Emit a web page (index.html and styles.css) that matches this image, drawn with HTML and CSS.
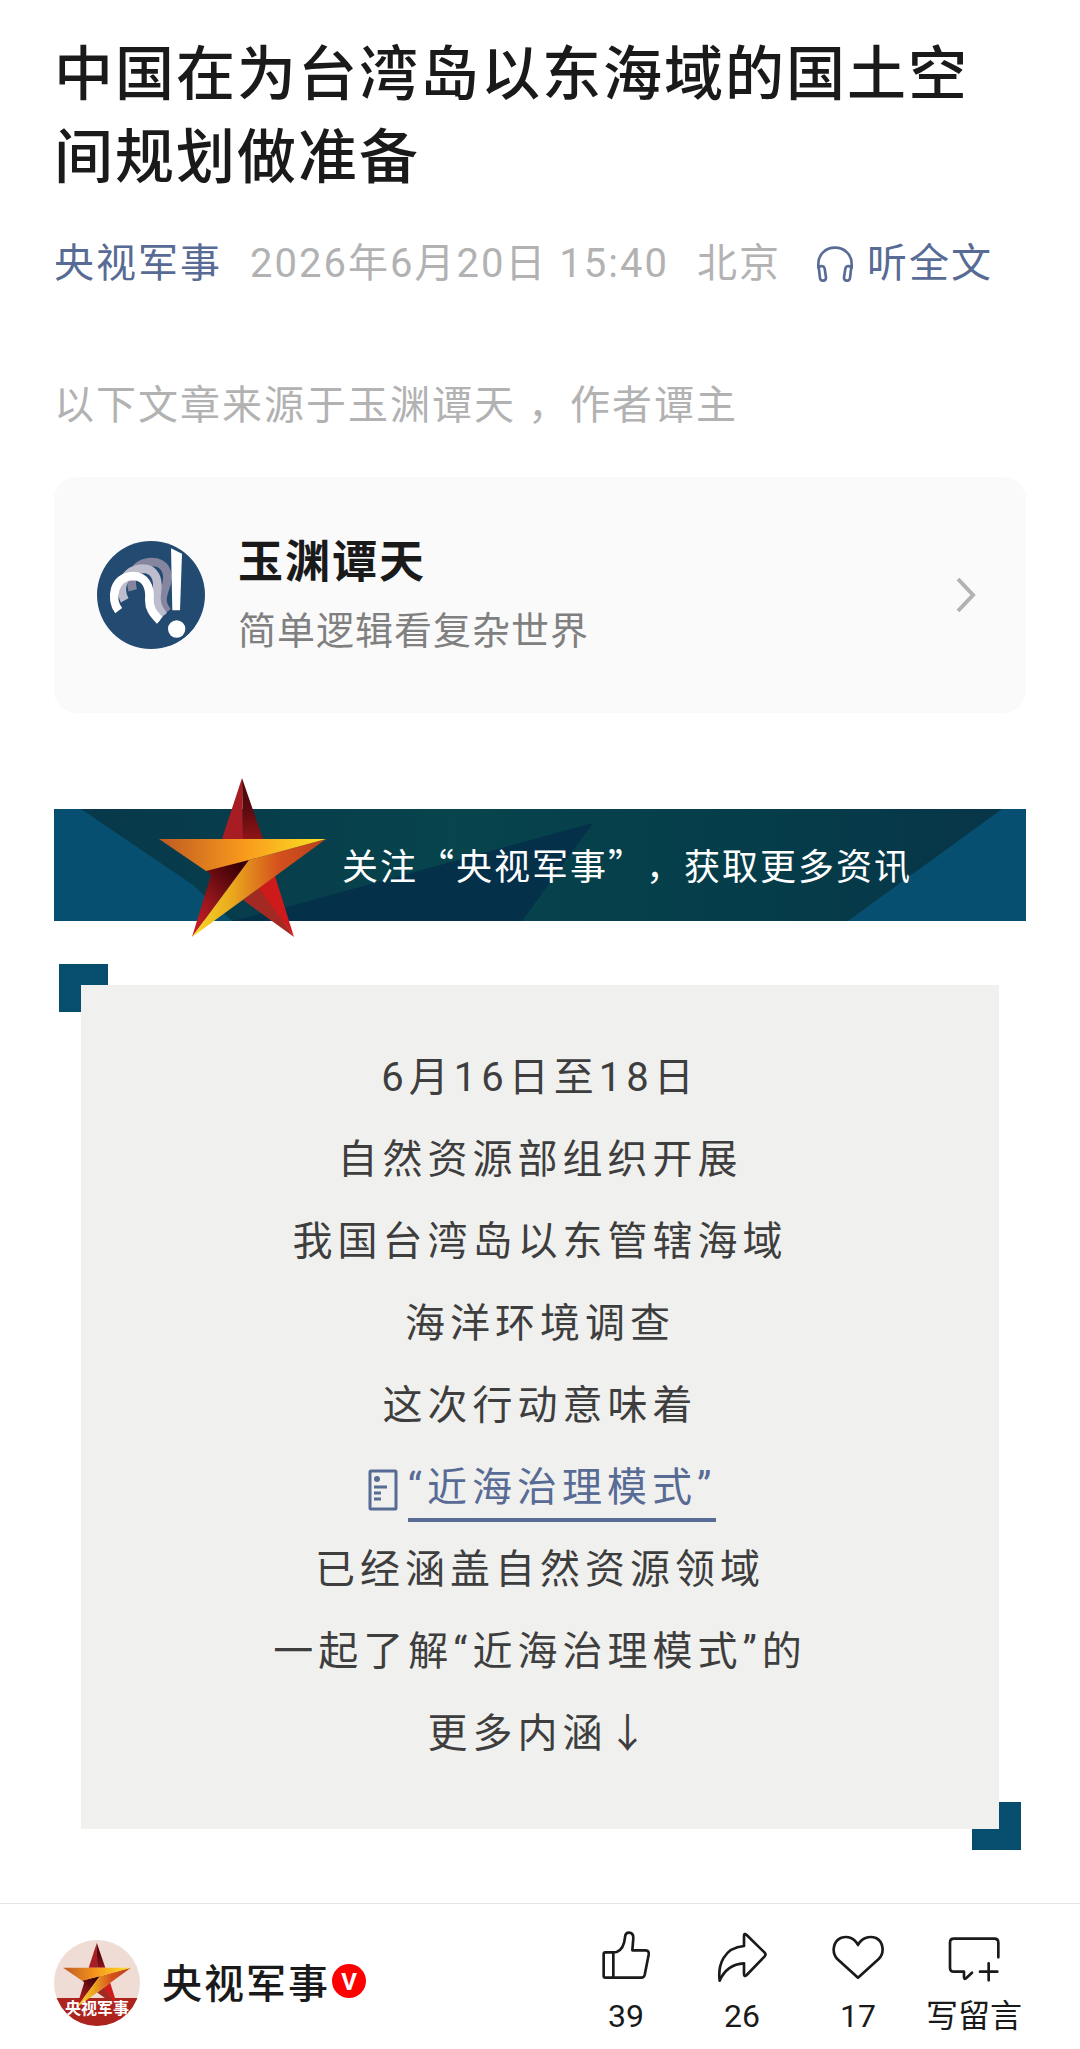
FILE: index.html
```html
<!DOCTYPE html>
<html lang="zh-CN">
<head>
    <meta charset="UTF-8">
    <meta name="viewport" content="width=device-width, initial-scale=1.0">
    <title>中国在为台湾岛以东海域的国土空间规划做准备</title>
    <link rel="stylesheet" href="styles.css">
</head>
<body>
    <main class="article">
        <h1 class="title">中国在为台湾岛以东海域的国土空间规划做准备</h1>
        <div class="meta">
            <a class="account" href="#">央视军事</a>
            <span>2026年6月20日 15:40</span>
            <span>北京</span>
            <button class="listen" type="button">
                <svg class="listen-icon" viewBox="49 44 108 108" aria-hidden="true">
                    <path d="M53 112 V98 C53 70 74 49 103 49 C132 49 153 70 153 98 V112" />
                    <path d="M54 106 Q70 101 72 112 L76 139 Q76 147 67 148 Q60 149 58 140 Z" />
                    <path d="M152 106 Q136 101 134 112 L130 139 Q130 147 139 148 Q146 149 148 140 Z" />
                </svg>
                <span>听全文</span>
            </button>
        </div>

        <p class="source">以下文章来源于玉渊谭天 ，作者谭主</p>
        <a class="card" href="#">
            <svg class="card-logo" viewBox="51 63 324 324" aria-hidden="true">
                <defs>
                    <clipPath id="disc"><circle cx="213" cy="225" r="162" /></clipPath>
                </defs>
                <g clip-path="url(#disc)">
                    <rect x="51" y="63" width="324" height="324" fill="#234a70" />
                    <g fill="none" stroke-width="26">
                        <path stroke="#8585a0" d="M158 211 C150 180 155 128 216 126 C254 126 268 157 260 190 C248 225 238 245 262 275" />
                        <path stroke="#bdbdcd" d="M134 241 C112 200 135 148 188 146 C225 146 236 178 231 212 C226 242 230 262 252 288" />
                        <path stroke="#fff" d="M116 272 C90 238 100 170 158 168 C196 168 212 200 208 240 C208 264 216 278 240 302" />
                    </g>
                    <circle cx="290" cy="327" r="56" fill="#234a70" />
                    <path fill="#fff" d="M273 85 L306 101 L300 271 L277 271 Z" />
                    <circle cx="290" cy="327" r="26" fill="#fff" />
                </g>
            </svg>
            <span class="card-text">
                <strong class="card-name">玉渊谭天</strong>
                <span class="card-desc">简单逻辑看复杂世界</span>
            </span>
            <svg class="card-arrow" viewBox="0 0 20 36" aria-hidden="true">
                <path d="M2 2 L17 18 L2 34" />
            </svg>
        </a>

        <div class="banner">
            <svg class="banner-bg" viewBox="0 0 972 112" preserveAspectRatio="none" aria-hidden="true">
                <defs>
                    <linearGradient id="teal">
                        <stop offset="0" stop-color="#07384b" />
                        <stop offset="0.4" stop-color="#07444c" />
                        <stop offset="0.7" stop-color="#053e4a" />
                        <stop offset="1" stop-color="#073548" />
                    </linearGradient>
                </defs>
                <rect width="972" height="112" fill="#064f70" />
                <path fill="url(#teal)" d="M27 0 H948 L794 112 H178 L139 76 Z" />
                <path fill="#05304a" d="M539 14 L468 112 H178 L233 98 Z" />
            </svg>
            <svg class="banner-star" viewBox="0 0 167 160" aria-hidden="true">
                <defs>
                    <linearGradient id="band">
                        <stop offset="0" stop-color="#bd5a22" />
                        <stop offset="0.5" stop-color="#f8981c" />
                        <stop offset="1" stop-color="#fce424" />
                    </linearGradient>
                    <linearGradient id="tail">
                        <stop offset="0" stop-color="#f8dc26" />
                        <stop offset="0.3" stop-color="#eaa81e" />
                        <stop offset="0.65" stop-color="#d4501c" />
                        <stop offset="1" stop-color="#b8401c" />
                    </linearGradient>
                    <linearGradient id="fold" x1="0" y1="1" x2="0.7" y2="0">
                        <stop offset="0" stop-color="#d81e28" />
                        <stop offset="0.5" stop-color="#8c151a" />
                        <stop offset="1" stop-color="#3a0004" />
                    </linearGradient>
                    <linearGradient id="spike" x1="0" y1="0" x2="0" y2="1">
                        <stop offset="0" stop-color="#4c0508" />
                        <stop offset="0.5" stop-color="#5a0a0e" />
                        <stop offset="1" stop-color="#901418" />
                    </linearGradient>
                    <symbol id="star" viewBox="0 0 167 160">
                        <path fill="#a81c24" d="M83 0 L63 61 H84 Z" />
                        <path fill="url(#spike)" d="M83 0 L84 61 H104 Z" />
                        <path fill="#a32a22" d="M84 122 L101 109 L135 159 Z" />
                        <path fill="#cf1a1c" d="M100 110 L116 98 L135 159 Z" />
                        <path fill="url(#fold)" d="M47 92 L91 81 L33 159 L52 97 Z" />
                        <path fill="url(#tail)" d="M167 61 L90 82 L33 159 Z" />
                        <path fill="url(#band)" d="M0 61 H167 L90 82 L47 93 Z" />
                    </symbol>
                </defs>
                <use href="#star" width="167" height="160" />
            </svg>
            <span class="banner-text">关注“央视军事”，获取更多资讯</span>
        </div>

        <section class="quote">
            <div class="quote-body">
                <p>6月16日至18日</p>
                <p>自然资源部组织开展</p>
                <p>我国台湾岛以东管辖海域</p>
                <p>海洋环境调查</p>
                <p>这次行动意味着</p>
                <p class="quote-link">
                    <svg class="doc-icon" viewBox="0 0 30 42" aria-hidden="true">
                        <rect x="2" y="2" width="26" height="38" rx="1" />
                        <path d="M6 18 H19 M6 24 H13 M6 30 H13" />
                        <circle cx="9" cy="10" r="3" />
                    </svg>
                    <a href="#">“近海治理模式”</a>
                </p>
                <p>已经涵盖自然资源领域</p>
                <p>一起了解“近海治理模式”的</p>
                <p>更多内涵↓</p>
            </div>
        </section>
    </main>

    <footer class="footer">
        <a class="profile" href="#">
            <svg class="avatar" viewBox="0 0 86 86" aria-hidden="true">
                <defs>
                    <clipPath id="round"><circle cx="43" cy="43" r="43" /></clipPath>
                </defs>
                <g clip-path="url(#round)">
                    <rect width="86" height="86" fill="#eedcd5" />
                    <rect y="58" width="86" height="28" fill="#ad241f" />
                    <use href="#star" x="9" y="3" width="68" height="65" />
                    <text class="avatar-text" x="43" y="74">央视军事</text>
                </g>
            </svg>
            <span class="profile-name">央视军事</span>
            <span class="verified">V</span>
        </a>
        <div class="actions">
            <button class="action" type="button">
                <svg viewBox="60 90 156 156" aria-hidden="true">
                    <path d="M100 157 H76 Q71 157 71 162 V228 Q71 233 76 233 H184 Q192 233 194 225 L206 164 Q208 152 197 151 H157 L160 114 Q160 98 147 98 Q136 98 135 112 Q132 147 110 156 Z M100 157 V233" />
                </svg>
                <span>39</span>
            </button>
            <button class="action" type="button">
                <svg viewBox="407 90 156 156" aria-hidden="true">
                    <path d="M418 242 C412 195 430 143 491 138 V108 Q491 98 499 105 L553 158 Q558 164 553 169 L499 225 Q491 232 491 222 V190 C455 192 432 210 418 242 Z" />
                </svg>
                <span>26</span>
            </button>
            <button class="action" type="button">
                <svg viewBox="754 90 156 156" aria-hidden="true">
                    <path d="M832 233 L770 177 C752 158 757 125 780 114 C802 106 822 115 832 135 C842 115 864 106 886 114 C908 125 913 158 894 177 Z" />
                </svg>
                <span>17</span>
            </button>
            <button class="action" type="button">
                <svg viewBox="1104 90 156 156" aria-hidden="true">
                    <path d="M1255 172 V128 Q1255 116 1243 116 H1122 Q1110 116 1110 128 V203 Q1110 215 1122 215 H1152 V232 Q1152 240 1159 234 L1176 218 M1200 215 H1252 M1226 190 V241" />
                </svg>
                <span>写留言</span>
            </button>
        </div>
    </footer>
</body>
</html>
```
FILE: styles.css
```css
* {
    box-sizing: border-box;
}

body {
    margin: 0;
    font-family: Roboto, "Noto Sans CJK SC", sans-serif;
    font-size: 40px;
    letter-spacing: 2px;
    color: #1a1a1a;
    background-color: #fff;
}

a {
    color: #576b95;
    text-decoration: none;
}

button {
    padding: 0;
    border: none;
    background: none;
    font-family: inherit;
    font-size: inherit;
    letter-spacing: inherit;
    line-height: inherit;
    cursor: pointer;
}

svg {
    display: block;
    flex-shrink: 0;
}

.article {
    padding: 33px 54px 53px;
}

.title {
    margin: 0 0 37px;
    font-size: 59px;
    font-weight: 500;
    line-height: 83px;
}

.meta {
    display: flex;
    align-items: center;
    gap: 28px;
    line-height: 56px;
    color: #b2b2b2;
}

.listen {
    display: flex;
    align-items: center;
    gap: 14px;
    margin-left: 8px;
    color: #576b95;
}

.listen-icon {
    width: 36px;
    height: 36px;
    fill: none;
    stroke: #576b95;
    stroke-width: 8;
    stroke-linejoin: round;
}

.source {
    margin: 86px 0 43px;
    line-height: 56px;
    color: #b2b2b2;
}

.card {
    display: flex;
    align-items: center;
    gap: 33px;
    min-height: 236px;
    padding: 40px 50px 40px 43px;
    border-radius: 22px;
    background-color: #fafafa;
}

.card-logo {
    width: 108px;
    height: 108px;
}

.card-text {
    display: flex;
    flex: 1;
    flex-direction: column;
    gap: 8px;
}

.card-name {
    font-size: 45px;
    font-weight: 700;
    line-height: 64px;
    color: #1a1a1a;
}

.card-desc {
    font-size: 38px;
    letter-spacing: 1px;
    line-height: 56px;
    color: #808080;
}

.card-arrow {
    width: 20px;
    height: 36px;
    fill: none;
    stroke: #b2b2b2;
    stroke-width: 4;
}

/* follow banner */
.banner {
    position: relative;
    display: flex;
    align-items: center;
    height: 112px;
    margin-top: 96px;
    padding-left: 105px;
}

.banner-bg {
    position: absolute;
    top: 0;
    left: 0;
    width: 100%;
    height: 100%;
}

.banner-star {
    position: relative;
    width: 167px;
    height: 160px;
    margin: -31px 16px -17px 0;
}

.banner-text {
    position: relative;
    padding-bottom: 2px;
    font-family: "Noto Sans CJK SC", sans-serif;
    font-size: 36px;
    text-spacing-trim: space-all;
    color: #fff;
    white-space: nowrap;
}

/* framed text with two corners */
.quote {
    position: relative;
    margin: 43px 5px 0;
    padding: 21px 22px;
}

.quote::before,
.quote::after {
    content: "";
    position: absolute;
    width: 49px;
    height: 48px;
    background-color: #074e6e;
}

.quote::before {
    top: 0;
    left: 0;
}

.quote::after {
    right: 0;
    bottom: 0;
}

.quote-body {
    position: relative;
    z-index: 1;
    padding: 52px 0 54px;
    background-color: #f0f0ee;
    font-size: 40px;
    letter-spacing: 5px;
    line-height: 82px;
    text-align: center;
    color: #3e3e3e;
}

.quote-body p {
    margin: 0;
}

.quote-link {
    display: flex;
    align-items: center;
    justify-content: center;
    gap: 10px;
}

.quote-body .quote-link {
    padding: 11px 0 7px 4px;
}

.quote-link a {
    line-height: 60px;
    border-bottom: 4px solid #576b95;
}

.doc-icon {
    width: 30px;
    height: 42px;
    fill: none;
    stroke: #576b95;
    stroke-width: 3;
}

.doc-icon circle {
    fill: #576b95;
    stroke: none;
}

.footer {
    display: flex;
    align-items: center;
    justify-content: space-between;
    padding: 26px 48px 13px 54px;
    border-top: 1px solid #e5e5e5;
}

.profile {
    display: flex;
    align-items: center;
    color: #1a1a1a;
}

.avatar {
    width: 86px;
    height: 86px;
    margin-right: 22px;
}

.avatar-text {
    font-size: 16px;
    font-weight: 700;
    letter-spacing: 0;
    text-anchor: middle;
    fill: #fff;
}

.profile-name {
    padding-bottom: 5px;
    font-weight: 500;
}

.verified {
    width: 34px;
    height: 34px;
    margin: 0 0 4px 2px;
    border-radius: 50%;
    background-color: #f00;
    font-size: 24px;
    font-weight: 700;
    letter-spacing: 0;
    line-height: 36px;
    text-align: center;
    color: #fff;
}

.actions {
    display: flex;
}

.action {
    display: flex;
    flex-direction: column;
    align-items: center;
    gap: 14px;
    width: 116px;
    font-size: 32px;
    letter-spacing: 0;
    line-height: 40px;
    color: #1a1a1a;
}

.action svg {
    width: 52px;
    height: 52px;
    fill: none;
    stroke: #1a1a1a;
    stroke-width: 8;
    stroke-linejoin: round;
    stroke-linecap: round;
}
```
